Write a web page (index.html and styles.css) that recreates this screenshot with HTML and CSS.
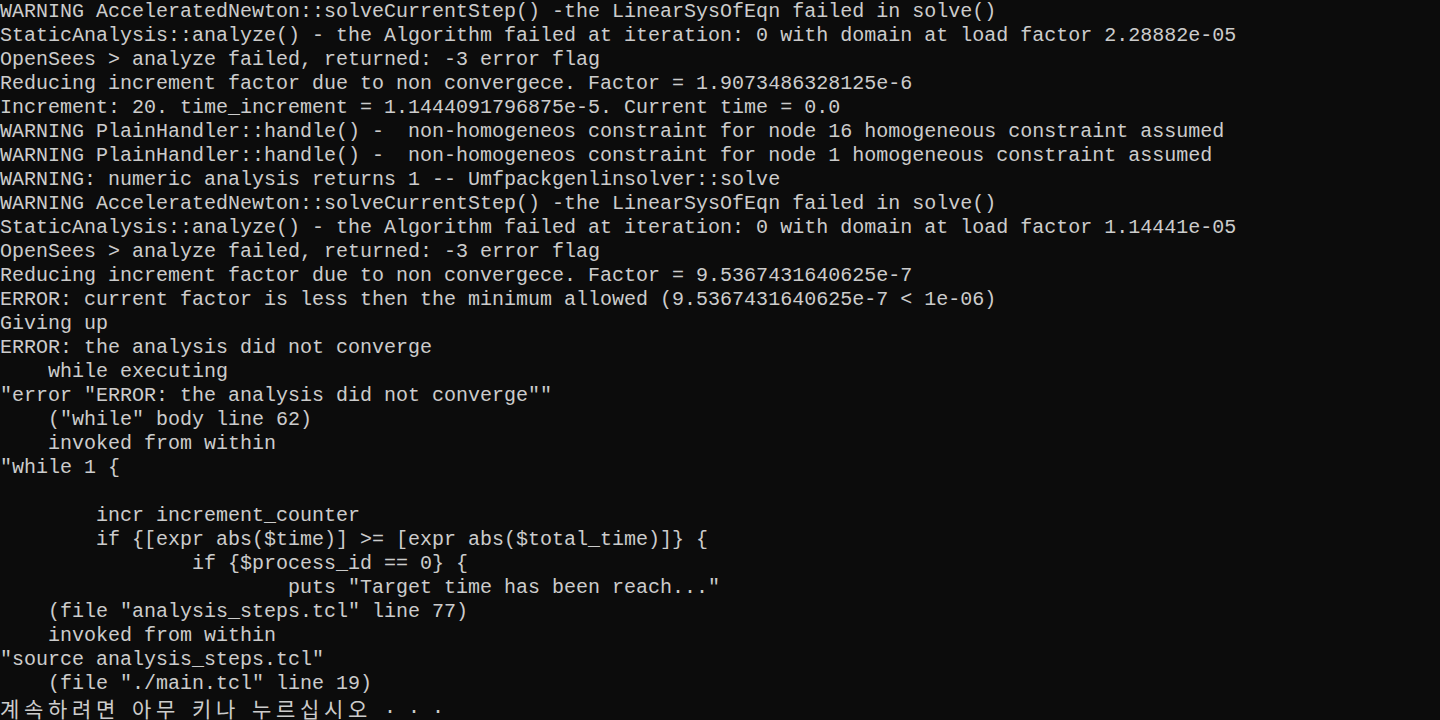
FILE: index.html
```html
<!DOCTYPE html>
<html lang="ko">
<head>
<meta charset="utf-8">
<title>Console</title>
<link rel="stylesheet" href="styles.css">
</head>
<body>
<pre class="console">WARNING AcceleratedNewton::solveCurrentStep() -the LinearSysOfEqn failed in solve()
StaticAnalysis::analyze() - the Algorithm failed at iteration: 0 with domain at load factor 2.28882e-05
OpenSees &gt; analyze failed, returned: -3 error flag
Reducing increment factor due to non convergece. Factor = 1.9073486328125e-6
Increment: 20. time_increment = 1.1444091796875e-5. Current time = 0.0
WARNING PlainHandler::handle() -  non-homogeneos constraint for node 16 homogeneous constraint assumed
WARNING PlainHandler::handle() -  non-homogeneos constraint for node 1 homogeneous constraint assumed
WARNING: numeric analysis returns 1 -- Umfpackgenlinsolver::solve
WARNING AcceleratedNewton::solveCurrentStep() -the LinearSysOfEqn failed in solve()
StaticAnalysis::analyze() - the Algorithm failed at iteration: 0 with domain at load factor 1.14441e-05
OpenSees &gt; analyze failed, returned: -3 error flag
Reducing increment factor due to non convergece. Factor = 9.5367431640625e-7
ERROR: current factor is less then the minimum allowed (9.5367431640625e-7 &lt; 1e-06)
Giving up
ERROR: the analysis did not converge
    while executing
"error "ERROR: the analysis did not converge""
    ("while" body line 62)
    invoked from within
"while 1 {

        incr increment_counter
        if {[expr abs($time)] &gt;= [expr abs($total_time)]} {
                if {$process_id == 0} {
                        puts "Target time has been reach..."
    (file "analysis_steps.tcl" line 77)
    invoked from within
"source analysis_steps.tcl"
    (file "./main.tcl" line 19)
<span class="ko">계</span><span class="ko">속</span><span class="ko">하</span><span class="ko">려</span><span class="ko">면</span> <span class="ko">아</span><span class="ko">무</span> <span class="ko">키</span><span class="ko">나</span> <span class="ko">누</span><span class="ko">르</span><span class="ko">십</span><span class="ko">시</span><span class="ko">오</span> . . .</pre>
</body>
</html>
```
FILE: styles.css
```css
html, body {
  margin: 0;
  padding: 0;
  background: #0c0c0c;
  height: 100%;
  overflow: hidden;
}
.console {
  margin: 0;
  padding: 0;
  color: #cccccc;
  font-family: "Liberation Mono", "DejaVu Sans Mono", monospace;
  font-size: 20px;
  line-height: 24px;
  white-space: pre;
}
.ko {
  display: inline-block;
  width: 24px;
  font-family: "Noto Sans CJK KR", sans-serif;
  font-size: 21px;
  line-height: 24px;
  vertical-align: top;
}
```
